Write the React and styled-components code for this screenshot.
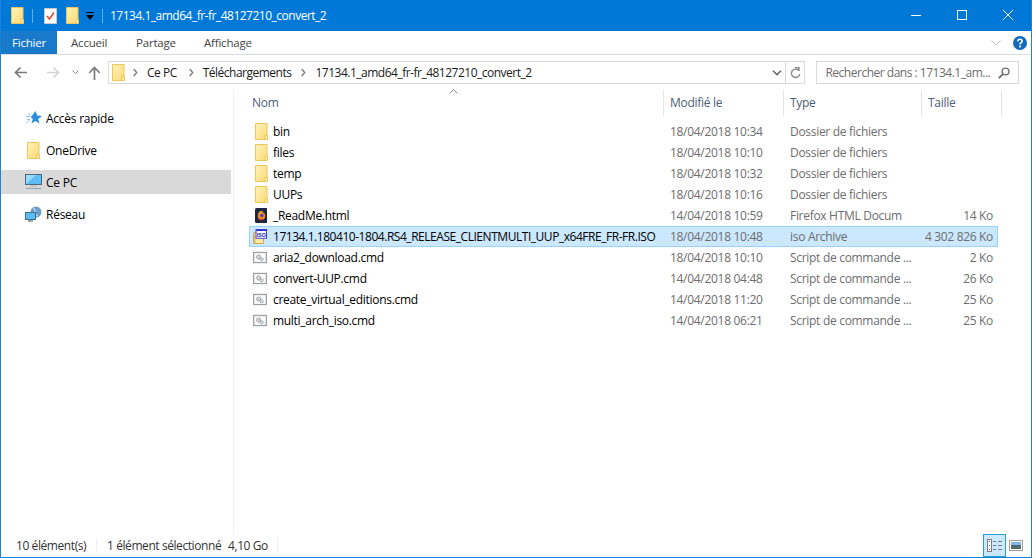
import React from "react";
import styled, { createGlobalStyle } from "styled-components";

const Global = createGlobalStyle`
  html, body { margin: 0; padding: 0; background: #fff; }
  * { box-sizing: border-box; }
  body { font-family: "Open Sans", "Noto Sans", "Liberation Sans", sans-serif; font-size: 12px; letter-spacing: -0.28px; }
`;

const Win = styled.div`
  width: 1032px; height: 558px; display: flex; flex-direction: column; overflow: hidden;
  border: 1px solid #1a83d8; border-top: 0; background: #fff;
`;
const TitleBar = styled.div`
  height: 31px; flex: none; background: #0078d7; display: flex; align-items: center; color: #fff;
  margin: 0 -1px; padding: 0 1px 0 11px;
`;
const QuickIcon = styled.span`display: flex; margin-right: ${p => p.$mr}px;`;
const TitleSep = styled.span`width: 1px; height: 14px; background: #66aee7; margin-right: ${p => p.$mr}px;`;
const TitleText = styled.span`flex: 1; font-size: 12px; letter-spacing: -0.5px; color: #fff;`;
const Ctrl = styled.span`width: 46px; height: 31px; display: flex; align-items: center; justify-content: center; margin-top: -1px;`;

const Ribbon = styled.div`
  height: 24px; flex: none; display: flex; align-items: stretch; border-bottom: 1px solid #dadbdc;
`;
const FileTab = styled.div`
  width: 56px; height: 23px; background: #1979ca; color: #fff; padding-left: 11px; line-height: 23px; font-size: 11.5px; margin-right: 14px; letter-spacing: -0.2px;
`;
const Tab = styled.div`
  width: ${p => p.$w}px; line-height: 23px; color: #444; font-size: 11.5px; letter-spacing: -0.2px;
`;
const RibbonEnd = styled.div`
  margin-left: auto; display: flex; align-items: center; gap: 12px; padding-right: 4px;
`;

const AddrRow = styled.div`
  height: 35px; flex: none; display: flex; align-items: center; padding: 0 12px 0 13px;
`;
const Nav = styled.span`display: flex; margin-right: ${p => p.$mr}px;`;
const AddrBox = styled.div`
  width: 680px; height: 23px; border: 1px solid #d9d9d9; display: flex; align-items: center; padding-left: 3px; margin-left: 7px;
`;
const Crumb = styled.span`color: #1a1a1a; margin-right: ${p => p.$mr}px; letter-spacing: -0.5px;`;
const CrumbArrow = styled.span`display: flex; margin-right: ${p => p.$mr}px; margin-left: ${p => p.$ml || 0}px;`;
const AddrEnd = styled.span`margin-left: auto; display: flex; margin-right: 3px;`;
const RefreshBox = styled.div`
  width: 19px; height: 23px; border: 1px solid #d9d9d9; border-left: 0; display: flex; align-items: center; justify-content: center;
`;
const SearchBox = styled.div`
  width: 203px; height: 23px; border: 1px solid #d9d9d9; margin-left: 11px; display: flex; align-items: center; justify-content: space-between;
  padding: 0 8px 0 8px; color: #6d6d6d; letter-spacing: -0.49px;
`;

const Main = styled.div`flex: 1; display: flex; min-height: 0;`;
const Side = styled.nav`
  width: 233px; flex: none; border-right: 1px solid #f0f0f0; padding-top: 16px; display: flex; flex-direction: column; gap: 8px;
`;
const SideItem = styled.div`
  height: 24px; width: 230px; display: flex; align-items: center; color: #000; background: ${p => p.$active ? "#d9d9d9" : "transparent"};
  padding-left: ${p => p.$pl}px;
`;
const SideLabel = styled.span`margin-left: ${p => p.$ml}px; letter-spacing: -0.25px;`;

const List = styled.div`flex: 1; padding-left: 15px; position: relative;`;
const SortArrow = styled.span`position: absolute; left: 215px; top: -1px; display: flex;`;
const Head = styled.div`
  display: grid; grid-template-columns: 415px 120px 138px 80px; height: 26px; margin-bottom: 5px;
`;
const HeadCell = styled.div`
  border-right: 1px solid #e5e5e5; color: #4c607a; padding-left: ${p => p.$pl || 6}px; line-height: 26px;
`;
const Rows = styled.div`display: flex; flex-direction: column;`;
const Row = styled.div`
  display: grid; grid-template-columns: 415px 120px 138px 76px; width: 749px; height: 21px; align-items: center;
  background: ${p => p.$sel ? "#cce8ff" : "transparent"};
  box-shadow: ${p => p.$sel ? "inset 0 0 0 1px #99d1ff" : "none"};
`;
const NameCell = styled.div`display: flex; align-items: center; padding-left: 5px; color: #000; white-space: nowrap;`;
const IconBox = styled.span`width: 14px; flex: none; display: flex; margin-left: ${p => p.$x}px; margin-right: ${p => -p.$x}px;`;
const NameText = styled.span`margin-left: 5px; letter-spacing: ${p => p.$tight ? "-0.46px" : "-0.3px"};`;
const Meta = styled.div`color: #6d6d6d; padding-left: 6px; white-space: nowrap; overflow: hidden; letter-spacing: -0.3px;`;
const Size = styled.div`color: #6d6d6d; text-align: right; padding-right: 5px; white-space: nowrap; letter-spacing: -0.32px;`;

const Status = styled.div`
  height: 24px; flex: none; display: flex; align-items: center; color: #333; padding-left: 15px; margin-top: -1px;
`;
const StatusText = styled.span`width: ${p => p.$w}px; flex: none; letter-spacing: -0.42px;`;
const StatusSep = styled.span`width: 1px; height: 14px; background: #f0f0f0; margin-right: ${p => p.$mr}px;`;
const ViewBtns = styled.div`margin-left: auto; display: flex; align-items: center; height: 24px; padding-right: 8px; gap: 3px;`;
const ViewOn = styled.div`
  width: 23px; height: 23px; background: #cce8ff; border: 1px solid #26a0da; display: flex; align-items: center; justify-content: center;
`;
const IsoLabel = styled.text`font-family: "Liberation Sans", sans-serif; font-size: 6px; font-weight: 700; letter-spacing: -0.2px; fill: #1c1cb0;`;

const Folder = ({ w = 13, h = 17 }) => (
  <svg width={w} height={h} viewBox="0 0 13 17">
    <defs>
      <linearGradient id="fg" x1="0" y1="0" x2="1" y2="1">
        <stop offset="0" stopColor="#fff3b8" /><stop offset="1" stopColor="#fcd977" />
      </linearGradient>
    </defs>
    <path d="M.5.5h11.5v16H.5z" fill="url(#fg)" stroke="#ecc65a" />
    <path d="M10 16.5v-4h2.5v4z" fill="#fff0b0" stroke="#ecc65a" />
  </svg>
);
const CmdIcon = () => (
  <svg width="16" height="13" viewBox="0 0 16 13">
    <rect x=".75" y=".75" width="14.5" height="11.5" fill="#fff" stroke="#a0a0a0" strokeWidth="1.5" />
    <circle cx="6.5" cy="6" r="2.4" fill="#d6d6d6" stroke="#8b8b8b" strokeWidth=".8" />
    <circle cx="10" cy="8.5" r="1.8" fill="#dce8ef" stroke="#7f97a5" strokeWidth=".8" />
  </svg>
);
const FoxIcon = () => (
  <svg width="12" height="15" viewBox="0 0 12 15">
    <path d="M0 1.5Q0 0 1.5 0H12v15H1.5Q0 15 0 13.5z" fill="#1d2440" />
    <circle cx="6.5" cy="8" r="3.8" fill="#f58a1f" />
    <circle cx="6.8" cy="7.5" r="1.8" fill="#5a3fb0" />
    <path d="M3.5 5.5q2-2.5 4.5-1.5" stroke="#f2c230" strokeWidth="1.2" fill="none" />
    <path d="M3.6 10.6q1.6 1.4 3.4.9" stroke="#e23b2e" strokeWidth="1.2" fill="none" />
  </svg>
);
const IsoIcon = () => (
  <svg width="16" height="17" viewBox="0 0 16 17">
    <path d="M.5 6.5l1-3h3v13H1z" fill="#f4d679" stroke="#b8963a" />
    <path d="M2 16.5V9h10v7.5z" fill="#fce9a0" stroke="#c9a43f" />
    <rect x="3.5" y=".5" width="12" height="10" fill="#fff" stroke="#2b2bd0" />
    <rect x="4" y="1" width="11" height="1.2" fill="#2b2bd0" />
    <IsoLabel x="4.6" y="8.6">ISO</IsoLabel>
  </svg>
);
const Star = () => (
  <svg width="16" height="15" viewBox="0 0 16 15">
    <path d="M9.5 0l1.7 4.6 4.8.3-3.8 3 1.3 4.7-4-2.7-4 2.7 1.3-4.7-2-1.6z" fill="#2b8fdc" />
    <path d="M0 5.5h4M1 8.5h3M0 12l3.5-2.5M2 2.5l3 2" stroke="#8cc4ee" strokeWidth="1" />
  </svg>
);
const Pc = () => (
  <svg width="17" height="16" viewBox="0 0 17 16">
    <rect x=".5" y=".5" width="16" height="10" fill="#5cbcf5" stroke="#4a6b83" />
    <path d="M1 10V1h10z" fill="#9bdcfb" />
    <rect x="5" y="11" width="7" height="2" fill="#c4c4c4" />
    <rect x="1" y="14" width="15" height="1" fill="#8fa3b0" />
  </svg>
);
const Net = () => (
  <svg width="17" height="17" viewBox="0 0 17 17">
    <circle cx="11" cy="6" r="5.5" fill="#6f9fca" />
    <path d="M8 2q3 1 2 4t3 4" stroke="#dbe9f4" strokeWidth="1" fill="none" />
    <rect x=".5" y="6.5" width="10" height="7" fill="#5cbcf5" stroke="#3d6d8f" />
    <rect x="3" y="14" width="5" height="2" fill="#9aa6ae" />
  </svg>
);
const Chev = ({ c = "#7f7f7f" }) => (
  <svg width="5" height="9" viewBox="0 0 5 9"><path d="M.7 1l3 3.5-3 3.5" fill="none" stroke={c} strokeWidth="1.4" /></svg>
);
const Arrow = ({ c, d }) => (
  <svg width="14" height="13" viewBox="0 0 14 13"><path d={d} fill="none" stroke={c} strokeWidth="1.7" /></svg>
);

const files = [
  ["folder", "bin", "18/04/2018 10:34", "Dossier de fichiers", ""],
  ["folder", "files", "18/04/2018 10:10", "Dossier de fichiers", ""],
  ["folder", "temp", "18/04/2018 10:32", "Dossier de fichiers", ""],
  ["folder", "UUPs", "18/04/2018 10:16", "Dossier de fichiers", ""],
  ["fox", "_ReadMe.html", "14/04/2018 10:59", "Firefox HTML Docum", "14 Ko"],
  ["iso", "17134.1.180410-1804.RS4_RELEASE_CLIENTMULTI_UUP_x64FRE_FR-FR.ISO", "18/04/2018 10:48", "iso Archive", "4 302 826 Ko", true],
  ["cmd", "aria2_download.cmd", "18/04/2018 10:10", "Script de commande ...", "2 Ko"],
  ["cmd", "convert-UUP.cmd", "14/04/2018 04:48", "Script de commande ...", "26 Ko"],
  ["cmd", "create_virtual_editions.cmd", "14/04/2018 11:20", "Script de commande ...", "25 Ko"],
  ["cmd", "multi_arch_iso.cmd", "14/04/2018 06:21", "Script de commande ...", "25 Ko"],
];
const iconFor = k => k === "folder" ? <Folder /> : k === "fox" ? <FoxIcon /> : k === "iso" ? <IsoIcon /> : <CmdIcon />;
const nudge = k => (k === "folder" || k === "fox" ? 1 : -1);

export default function App() {
  return (
    <>
      <Global />
      <Win>
        <TitleBar>
          <QuickIcon $mr={8}><Folder /></QuickIcon>
          <TitleSep $mr={11} />
          <QuickIcon $mr={9}>
            <svg width="13" height="16" viewBox="0 0 13 16">
              <path d="M.5.5h12v15H.5z" fill="#fff" stroke="#c9c9c9" />
              <path d="M3 8l2.5 3L10 4.5" fill="none" stroke="#e2492b" strokeWidth="1.5" />
            </svg>
          </QuickIcon>
          <QuickIcon $mr={7}><Folder /></QuickIcon>
          <QuickIcon $mr={8}>
            <svg width="8" height="8" viewBox="0 0 8 8"><path d="M0 0h8v1H0zM0 3h8L4 8z" fill="#000" /></svg>
          </QuickIcon>
          <TitleSep $mr={7} />
          <TitleText>17134.1_amd64_fr-fr_48127210_convert_2</TitleText>
          <Ctrl><svg width="10" height="10" viewBox="0 0 10 10"><path d="M0 5.5h10" stroke="#fff" /></svg></Ctrl>
          <Ctrl><svg width="10" height="10" viewBox="0 0 10 10"><rect x=".5" y=".5" width="9" height="9" fill="none" stroke="#fff" /></svg></Ctrl>
          <Ctrl><svg width="10" height="10" viewBox="0 0 10 10"><path d="M0 0l10 10M10 0L0 10" stroke="#fff" /></svg></Ctrl>
        </TitleBar>
        <Ribbon>
          <FileTab>Fichier</FileTab>
          <Tab $w={65}>Accueil</Tab>
          <Tab $w={68}>Partage</Tab>
          <Tab $w={60}>Affichage</Tab>
          <RibbonEnd>
            <svg width="10" height="6" viewBox="0 0 10 6"><path d="M.5.5L5 5 9.5.5" fill="none" stroke="#c2c2c2" /></svg>
            <svg width="14" height="14" viewBox="0 0 14 14">
              <circle cx="7" cy="7" r="7" fill="#1369bd" />
              <path d="M4.8 5.3Q5 3.2 7 3.2t2.2 1.9Q9.2 6.2 7.8 7 7 7.5 7 8.6" fill="none" stroke="#fff" strokeWidth="1.6" />
              <rect x="6.1" y="9.6" width="1.8" height="1.8" fill="#fff" />
            </svg>
          </RibbonEnd>
        </Ribbon>
        <AddrRow>
          <Nav $mr={18}><Arrow c="#7b7b7b" d="M13 6.5H2M6.5 1.5l-5 5 5 5" /></Nav>
          <Nav $mr={12}><Arrow c="#d4d4d4" d="M1 6.5h11M7.5 1.5l5 5-5 5" /></Nav>
          <Nav $mr={9}><svg width="7" height="5" viewBox="0 0 7 5"><path d="M.5.5l3 3 3-3" fill="none" stroke="#8a8a8a" /></svg></Nav>
          <Nav $mr={0}><svg width="13" height="14" viewBox="0 0 13 14"><path d="M6.5 14V2M1.2 7l5.3-5.5L11.8 7" fill="none" stroke="#7b7b7b" strokeWidth="1.7" /></svg></Nav>
          <AddrBox>
            <Folder />
            <CrumbArrow $ml={8} $mr={9}><Chev /></CrumbArrow>
            <Crumb $mr={12}>Ce PC</Crumb>
            <CrumbArrow $mr={9}><Chev /></CrumbArrow>
            <Crumb $mr={10}>Téléchargements</Crumb>
            <CrumbArrow $mr={9}><Chev /></CrumbArrow>
            <Crumb $mr={12}>17134.1_amd64_fr-fr_48127210_convert_2</Crumb>
            <AddrEnd><svg width="10" height="6" viewBox="0 0 10 6"><path d="M1 .8l4 4 4-4" fill="none" stroke="#5f5f5f" strokeWidth="1.5" /></svg></AddrEnd>
          </AddrBox>
          <RefreshBox>
            <svg width="11" height="12" viewBox="0 0 11 12"><path d="M8.5 3.2A4.2 4.2 0 1 0 9.8 7M5 .5h4v3.5" fill="none" stroke="#8a8a8a" strokeWidth="1.4" /></svg>
          </RefreshBox>
          <SearchBox>
            <span>Rechercher dans : 17134.1_am...</span>
            <svg width="12" height="12" viewBox="0 0 12 12"><circle cx="7.5" cy="4.5" r="3.4" fill="none" stroke="#707070" strokeWidth="1.4" /><path d="M5 7L.8 11.2" stroke="#707070" strokeWidth="1.8" /></svg>
          </SearchBox>
        </AddrRow>
        <Main>
          <Side>
            <SideItem $pl={25}><Star /><SideLabel $ml={4}>Accès rapide</SideLabel></SideItem>
            <SideItem $pl={26}><Folder /><SideLabel $ml={6}>OneDrive</SideLabel></SideItem>
            <SideItem $active $pl={24}><Pc /><SideLabel $ml={4}>Ce PC</SideLabel></SideItem>
            <SideItem $pl={24}><Net /><SideLabel $ml={4}>Réseau</SideLabel></SideItem>
          </Side>
          <List>
            <SortArrow><svg width="9" height="5" viewBox="0 0 9 5"><path d="M.5 4.5l4-4 4 4" fill="none" stroke="#8a8a8a" /></svg></SortArrow>
            <Head>
              <HeadCell $pl={3}>Nom</HeadCell>
              <HeadCell>Modifié le</HeadCell>
              <HeadCell>Type</HeadCell>
              <HeadCell>Taille</HeadCell>
            </Head>
            <Rows>
              {files.map(([k, name, date, type, size, sel]) => (
                <Row key={name} $sel={sel}>
                  <NameCell>
                    <IconBox $x={nudge(k)}>{iconFor(k)}</IconBox>
                    <NameText $tight={sel}>{name}</NameText>
                  </NameCell>
                  <Meta>{date}</Meta>
                  <Meta>{type}</Meta>
                  <Size>{size}</Size>
                </Row>
              ))}
            </Rows>
          </List>
        </Main>
        <Status>
          <StatusText $w={80}>10 élément(s)</StatusText>
          <StatusSep $mr={10} />
          <StatusText $w={121}>1 élément sélectionné</StatusText>
          <StatusText $w={49}>4,10 Go</StatusText>
          <StatusSep $mr={0} />
          <ViewBtns>
            <ViewOn>
              <svg width="15" height="13" viewBox="0 0 15 13">
                <rect x=".5" y=".5" width="4" height="12" fill="#fff" stroke="#7b7b7b" />
                <path d="M2 2.5h1M2 6.5h1" stroke="#555" />
                <path d="M2 10.5h1" stroke="#d0342c" />
                <path d="M6 2.5h3M11 2.5h4M6 6.5h3M11 6.5h4M6 10.5h3M11 10.5h4" stroke="#7b7b7b" />
              </svg>
            </ViewOn>
            <svg width="14" height="11" viewBox="0 0 14 11">
              <rect x=".5" y=".5" width="13" height="10" fill="#fff" stroke="#a0a0a0" />
              <rect x="2" y="2" width="10" height="3" fill="#7fb4e8" />
              <rect x="2" y="5" width="10" height="4" fill="#4f6b6e" />
            </svg>
          </ViewBtns>
        </Status>
      </Win>
    </>
  );
}
